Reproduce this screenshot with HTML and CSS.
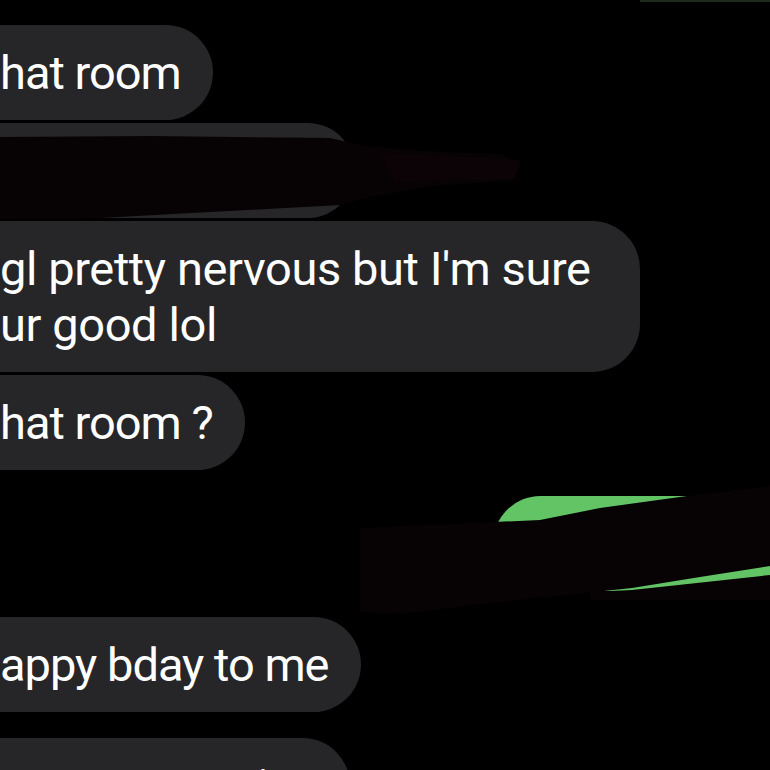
FILE: index.html
```html
<!DOCTYPE html>
<html lang="en">
<head>
<meta charset="utf-8">
<title>Messages</title>
<link rel="stylesheet" href="styles.css">
</head>
<body>
<div class="screen">
  <div class="thread">
    <div class="msg in">hat room</div>
    <div class="msg in redacted">&nbsp;</div>
    <div class="msg in wrap">gl pretty nervous but I'm sure ur good lol</div>
    <div class="msg in">hat room ?</div>
    <div class="msg out redacted-out">&nbsp;</div>
    <div class="msg in group-start">appy bday to me</div>
    <div class="msg in group-start">ur soo annoying</div>
  </div>
  <svg class="redactions" width="770" height="770" viewBox="0 0 770 770" aria-hidden="true">
    <rect x="640" y="0" width="130" height="2" fill="#1c2b1b"/>
    <polygon class="ink" points="0,137 150,136 330,138 360,145 420,151 500,154 522,164 512,181 430,186 362,199 340,205 100,218 0,220"/>
    <polygon class="ink-red" points="380,152 520,160 515,179 395,182"/>
    <polygon class="ink" points="360,528 540,520 600,508 687,496 770,486 770,566 700,577 632,588 500,602 400,614 360,612"/>
    <polygon class="ink" points="590,592 632,590 770,575 770,600 590,600"/>
  </svg>
</div>
</body>
</html>
```
FILE: styles.css
```css
html, body {
  margin: 0;
  background: #000;
}

.screen {
  position: relative;
  width: 770px;
  height: 770px;
  overflow: hidden;
  background: #000;
}

.thread {
  display: flex;
  flex-direction: column;
  align-items: flex-start;
  gap: 3px;
  padding-top: 25px;
  margin-left: -60px;
  margin-right: -80px;
}

.msg {
  font-family: Roboto, "Noto Sans", sans-serif;
  font-size: 47px;
  line-height: 56px;
  letter-spacing: -1px;
  color: #fff;
  background: #262628;
  border-radius: 48px;
  padding: 19.5px 32px 19.5px 60px;
  box-sizing: border-box;
}

.redacted {
  width: 415px;
}

.wrap {
  max-width: 700px;
  letter-spacing: -0.4px;
}

.out {
  align-self: flex-end;
  background: #62c465;
  width: 357px;
  margin-top: 23px;
}

.group-start {
  margin-top: 23px;
}

.redactions {
  position: absolute;
  left: 0;
  top: 0;
  pointer-events: none;
}

.ink {
  fill: #070305;
}

.ink-red {
  fill: #0c0306;
}
```
